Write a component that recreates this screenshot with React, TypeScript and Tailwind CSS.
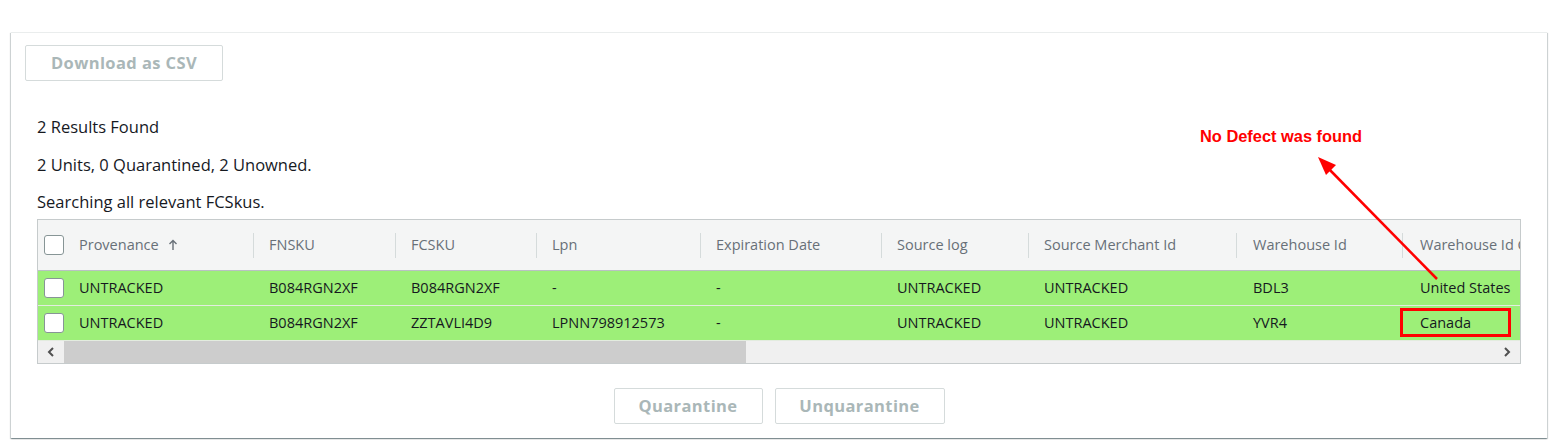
import React from 'react'

type Col = { label: string; w: number; pl: string }

const cols: Col[] = [
  { label: 'Provenance', w: 215, pl: 'pl-[16px]' },
  { label: 'FNSKU', w: 142, pl: 'pl-[16px]' },
  { label: 'FCSKU', w: 141, pl: 'pl-[16px]' },
  { label: 'Lpn', w: 164, pl: 'pl-[16px]' },
  { label: 'Expiration Date', w: 181, pl: 'pl-[16px]' },
  { label: 'Source log', w: 147, pl: 'pl-[16px]' },
  { label: 'Source Merchant Id', w: 208, pl: 'pl-[16px]' },
  { label: 'Warehouse Id', w: 166, pl: 'pl-[17px]' },
  { label: 'Warehouse Id Country', w: 200, pl: 'pl-[18px]' },
]

const rows: string[][] = [
  ['UNTRACKED', 'B084RGN2XF', 'B084RGN2XF', '-', '-', 'UNTRACKED', 'UNTRACKED', 'BDL3', 'United States'],
  ['UNTRACKED', 'B084RGN2XF', 'ZZTAVLI4D9', 'LPNN798912573', '-', 'UNTRACKED', 'UNTRACKED', 'YVR4', 'Canada'],
]

function Checkbox() {
  return <span className="block w-[20px] h-[20px] shrink-0 rounded-[3px] border border-[#879596] bg-white" />
}

function Button({ label, w }: { label: string; w: string }) {
  return (
    <button
      className={`${w} h-[36px] rounded-[2px] border border-[#d5dbdb] bg-white text-[16.5px] font-bold text-[#aab7b8] tracking-[0.4px]`}
    >
      {label}
    </button>
  )
}

export default function App() {
  return (
    <div className="relative w-[1557px] h-[444px] overflow-hidden bg-white pt-[32px] pl-[11px] font-['Open_Sans',sans-serif] text-[#16191f]">
      <div className="w-[1536px] h-[406px] bg-white border-t border-[#eaeded] shadow-[0_1px_1px_0_rgba(0,28,36,0.3),1px_1px_1px_0_rgba(0,28,36,0.15),-1px_1px_1px_0_rgba(0,28,36,0.15)] pt-[12px]">
        <div className="pl-[14px]">
          <Button label="Download as CSV" w="w-[198px]" />
        </div>

        <div className="px-[26px]">
          <div className="mt-[35px] flex flex-col gap-[15.5px] text-[16.5px] leading-[22px]">
            <p>2 Results Found</p>
            <p>2 Units, 0 Quarantined, 2 Unowned.</p>
            <p>Searching all relevant FCSkus.</p>
          </div>

          <div className="mt-[6px] w-[1484px] border border-[#c6cbcc] overflow-hidden">
            {/* header */}
            <div className="flex h-[51px] bg-[#f4f5f5] border-b border-[#b9c1c2] text-[14.5px] text-[#687078]">
              {cols.map((c, i) => (
                <div key={c.label} className="flex items-center shrink-0 whitespace-nowrap overflow-hidden" style={{ width: c.w }}>
                  {i === 0 ? (
                    <div className="flex items-center pl-[6px] gap-[15px]">
                      <Checkbox />
                      <span className="flex items-center gap-[9px]">
                        {c.label}
                        <svg width="10" height="12" viewBox="0 0 10 12">
                          <path d="M5 11V1.5M1.5 5L5 1.5 8.5 5" stroke="#687078" strokeWidth="1.4" fill="none" />
                        </svg>
                      </span>
                    </div>
                  ) : (
                    <>
                      <span className="w-px h-[25px] bg-[#d5dbdb] shrink-0" />
                      <span className={c.pl === 'pl-[16px]' ? 'pl-[15px]' : c.pl === 'pl-[17px]' ? 'pl-[16px]' : 'pl-[17px]'}>
                        {c.label}
                      </span>
                    </>
                  )}
                </div>
              ))}
            </div>

            {/* rows */}
            {rows.map((r, ri) => (
              <div key={ri} className="flex h-[35px] bg-[#9def78] border-b border-[#e3ecdf] text-[14.5px]">
                {r.map((v, ci) => (
                  <div
                    key={ci}
                    className="relative flex items-center shrink-0 whitespace-nowrap"
                    style={{ width: cols[ci].w }}
                  >
                    {ci === 0 ? (
                      <div className="flex items-center pl-[6px] gap-[15px]">
                        <Checkbox />
                        <span>{v}</span>
                      </div>
                    ) : (
                      <span className={cols[ci].pl}>{v}</span>
                    )}
                    {ri === 1 && ci === 8 && (
                      <span className="absolute left-[-2px] top-[2px] w-[111px] h-[29px] border-[3px] border-[#ff0000]" />
                    )}
                  </div>
                ))}
              </div>
            ))}

            {/* horizontal scrollbar */}
            <div className="flex h-[22px] bg-[#f0f0f0]">
              <div className="w-[26px] flex items-center justify-center">
                <svg width="8" height="10" viewBox="0 0 8 10">
                  <path d="M6 1L2 5l4 4" stroke="#505050" strokeWidth="2" fill="none" />
                </svg>
              </div>
              <div className="w-[682px] bg-[#cdcdcd]" />
              <div className="flex-1" />
              <div className="w-[26px] flex items-center justify-center">
                <svg width="8" height="10" viewBox="0 0 8 10">
                  <path d="M2 1l4 4-4 4" stroke="#505050" strokeWidth="2" fill="none" />
                </svg>
              </div>
            </div>
          </div>

          <div className="mt-[24px] flex justify-center gap-[12px]">
            <Button label="Quarantine" w="w-[149px]" />
            <Button label="Unquarantine" w="w-[170px]" />
          </div>
        </div>
      </div>

      {/* annotation overlay */}
      <div className="absolute left-[1200px] top-[126px] text-[16.4px] leading-[20px] font-bold text-[#ff0000] font-['Liberation_Sans',Arial,sans-serif]">
        No Defect was found
      </div>
      <svg className="absolute left-0 top-0 pointer-events-none" width="1557" height="444">
        <line x1="1437" y1="279" x2="1326" y2="166" stroke="#ff0000" strokeWidth="2.5" />
        <path d="M1318 157 L1336 165 L1326 175 Z" fill="#ff0000" />
      </svg>
    </div>
  )
}
